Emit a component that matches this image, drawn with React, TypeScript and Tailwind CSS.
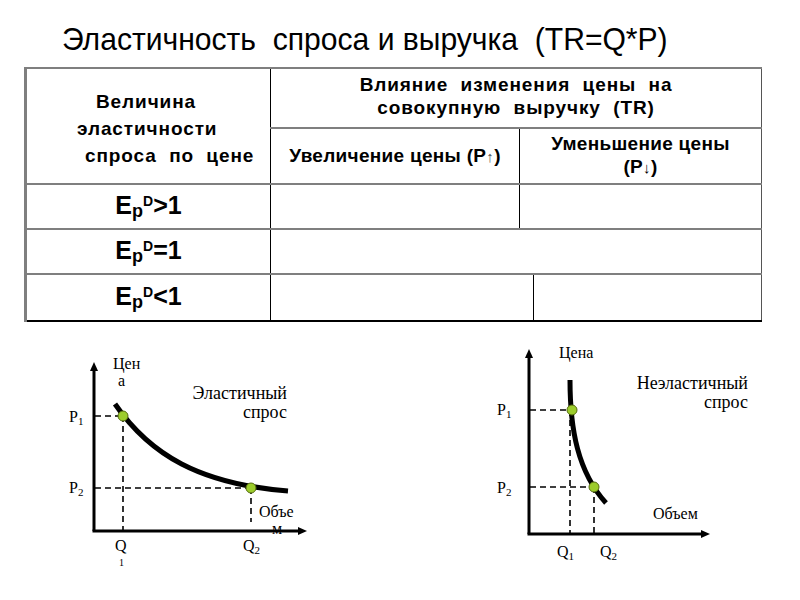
import React from 'react'

const serif = { fontFamily: '"Liberation Serif", "Times New Roman", serif' }

function Dot({ x, y }: { x: number; y: number }) {
  return <circle cx={x} cy={y} r={5} fill="#9ccc2c" stroke="#556b0f" strokeWidth={1} />
}

function Axes({ ox, oy, top, right }: { ox: number; oy: number; top: number; right: number }) {
  return (
    <g>
      <line x1={ox} y1={oy} x2={ox} y2={top + 6} stroke="#000" strokeWidth={3} />
      <path d={`M${ox - 4} ${top + 9} L${ox} ${top} L${ox + 4} ${top + 9} Z`} fill="#000" />
      <line x1={ox - 1.5} y1={oy} x2={right - 6} y2={oy} stroke="#000" strokeWidth={3} />
      <path d={`M${right - 9} ${oy - 4} L${right} ${oy} L${right - 9} ${oy + 4} Z`} fill="#000" />
    </g>
  )
}

function ElasticChart() {
  return (
    <svg width={270} height={230} viewBox="50 340 270 230" style={serif}>
      <g fontSize={16} fill="#000">
        <text x={113} y={369}>Цен</text>
        <text x={118} y={386}>а</text>
        <text x={287} y={399} textAnchor="end" fontSize={18}>Эластичный</text>
        <text x={287} y={418} textAnchor="end" fontSize={18}>спрос</text>
        <text x={69} y={422}>P<tspan fontSize={11} dy={3}>1</tspan></text>
        <text x={69} y={493}>P<tspan fontSize={11} dy={3}>2</tspan></text>
        <text x={259} y={517}>Объе</text>
        <text x={272} y={534}>м</text>
        <text x={115} y={551}>Q</text>
        <text x={119} y={566} fontSize={10}>1</text>
        <text x={243} y={551}>Q<tspan fontSize={11} dy={3}>2</tspan></text>
      </g>
      <g stroke="#000" strokeWidth={1.6} strokeDasharray="6 4" fill="none">
        <line x1={95} y1={416} x2={123} y2={416} />
        <line x1={123} y1={416} x2={123} y2={530} />
        <line x1={95} y1={488} x2={251} y2={488} />
        <line x1={251} y1={488} x2={251} y2={522} />
      </g>
      <Axes ox={94} oy={531} top={362} right={307} />
      <path d="M115 404 C150 455, 200 484, 288 491" stroke="#000" strokeWidth={5} fill="none" />
      <Dot x={123} y={416} />
      <Dot x={251} y={488} />
    </svg>
  )
}

function InelasticChart() {
  return (
    <svg width={290} height={235} viewBox="480 335 290 235" style={serif}>
      <g fontSize={16} fill="#000">
        <text x={559} y={358}>Цена</text>
        <text x={748} y={389} textAnchor="end" fontSize={18}>Неэластичный</text>
        <text x={748} y={408} textAnchor="end" fontSize={18}>спрос</text>
        <text x={497} y={415}>P<tspan fontSize={11} dy={3}>1</tspan></text>
        <text x={497} y={493}>P<tspan fontSize={11} dy={3}>2</tspan></text>
        <text x={653} y={519}>Объем</text>
        <text x={557} y={557}>Q<tspan fontSize={11} dy={3}>1</tspan></text>
        <text x={600} y={557}>Q<tspan fontSize={11} dy={3}>2</tspan></text>
      </g>
      <g stroke="#000" strokeWidth={1.6} strokeDasharray="6 4" fill="none">
        <line x1={530} y1={410} x2={572} y2={410} />
        <line x1={570} y1={410} x2={570} y2={533} />
        <line x1={530} y1={487} x2={594} y2={487} />
        <line x1={594} y1={487} x2={594} y2={533} />
      </g>
      <Axes ox={529} oy={534} top={349} right={710} />
      <path d="M570 380 C570 430, 578 472, 606 503" stroke="#000" strokeWidth={5} fill="none" />
      <Dot x={572} y={410} />
      <Dot x={594} y={487} />
    </svg>
  )
}

function Elasticity({ sign }: { sign: string }) {
  return (
    <span className="text-[25px] font-bold leading-none">
      E<span className="relative top-[3px] text-[18px]">p</span>
      <span className="relative -top-[8px] text-[14px]">D</span>
      {sign}1
    </span>
  )
}

export default function App() {
  const hline = 'border-b-2 border-b-[#7f7f7f]'
  return (
    <div
      className="w-[800px] h-[600px] bg-white text-black overflow-hidden"
      style={{ fontFamily: '"Liberation Sans", Arial, sans-serif' }}
    >
      <div className="pt-[21px] pl-[62px] h-[67px]">
        <h1 className="inline-block text-[32px] leading-[36px] font-normal whitespace-pre origin-left scale-x-[0.94]">
          Эластичность  спроса и выручка  (TR=Q*P)
        </h1>
      </div>

      <table className="ml-[24px] w-[738px] table-fixed border-collapse border-l-[3px] border-l-[#7f7f7f] border-t-2 border-t-[#7f7f7f] border-r border-r-[#555] border-b-2 border-b-black">
        <colgroup>
          <col className="w-[245px]" />
          <col className="w-[249px]" />
          <col className="w-[14px]" />
          <col />
        </colgroup>
        <tbody>
          <tr className="h-[60px]">
            <td rowSpan={2} className={`${hline} border-r border-r-black align-middle p-0`}>
              <div className="text-[19px] font-bold leading-[27px] tracking-[0.9px] whitespace-pre pt-[4px]">
                <div className="pl-[69px]">Величина</div>
                <div className="pl-[50px]">эластичности</div>
                <div className="pl-[58px]">спроса  по  цене</div>
              </div>
            </td>
            <td colSpan={3} className={`${hline} text-center text-[19px] font-bold leading-[23px] tracking-[0.9px] whitespace-pre pb-[4px]`}>
              <div>Влияние  изменения  цены  на</div>
              <div>совокупную  выручку  (TR)</div>
            </td>
          </tr>
          <tr className="h-[56px]">
            <td className={`${hline} border-r border-r-black text-center text-[19px] tracking-[0.3px] font-bold leading-[22px]`}>
              Увеличение цены (P<span className="font-normal text-[15px] text-[#555]">↑</span>)
            </td>
            <td colSpan={2} className={`${hline} text-center text-[19px] tracking-[0.3px] font-bold leading-[23px] pb-[2px]`}>
              <div>Уменьшение цены</div>
              <div>
                (P<span className="font-normal text-[15px]">↓</span>)
              </div>
            </td>
          </tr>
          <tr className="h-[45px]">
            <td className={`${hline} border-r border-r-black text-center`}>
              <Elasticity sign=">" />
            </td>
            <td className={`${hline} border-r border-r-black`} />
            <td colSpan={2} className={hline} />
          </tr>
          <tr className="h-[45px]">
            <td className={`${hline} border-r border-r-black text-center`}>
              <Elasticity sign="=" />
            </td>
            <td colSpan={3} className={hline} />
          </tr>
          <tr className="h-[47px]">
            <td className="border-r border-r-black text-center">
              <Elasticity sign="<" />
            </td>
            <td colSpan={2} className="border-r border-r-black" />
            <td />
          </tr>
        </tbody>
      </table>

      <div className="flex mt-[18px] pl-[50px] gap-[160px]">
        <ElasticChart />
        <div className="-mt-[5px]">
          <InelasticChart />
        </div>
      </div>
    </div>
  )
}
